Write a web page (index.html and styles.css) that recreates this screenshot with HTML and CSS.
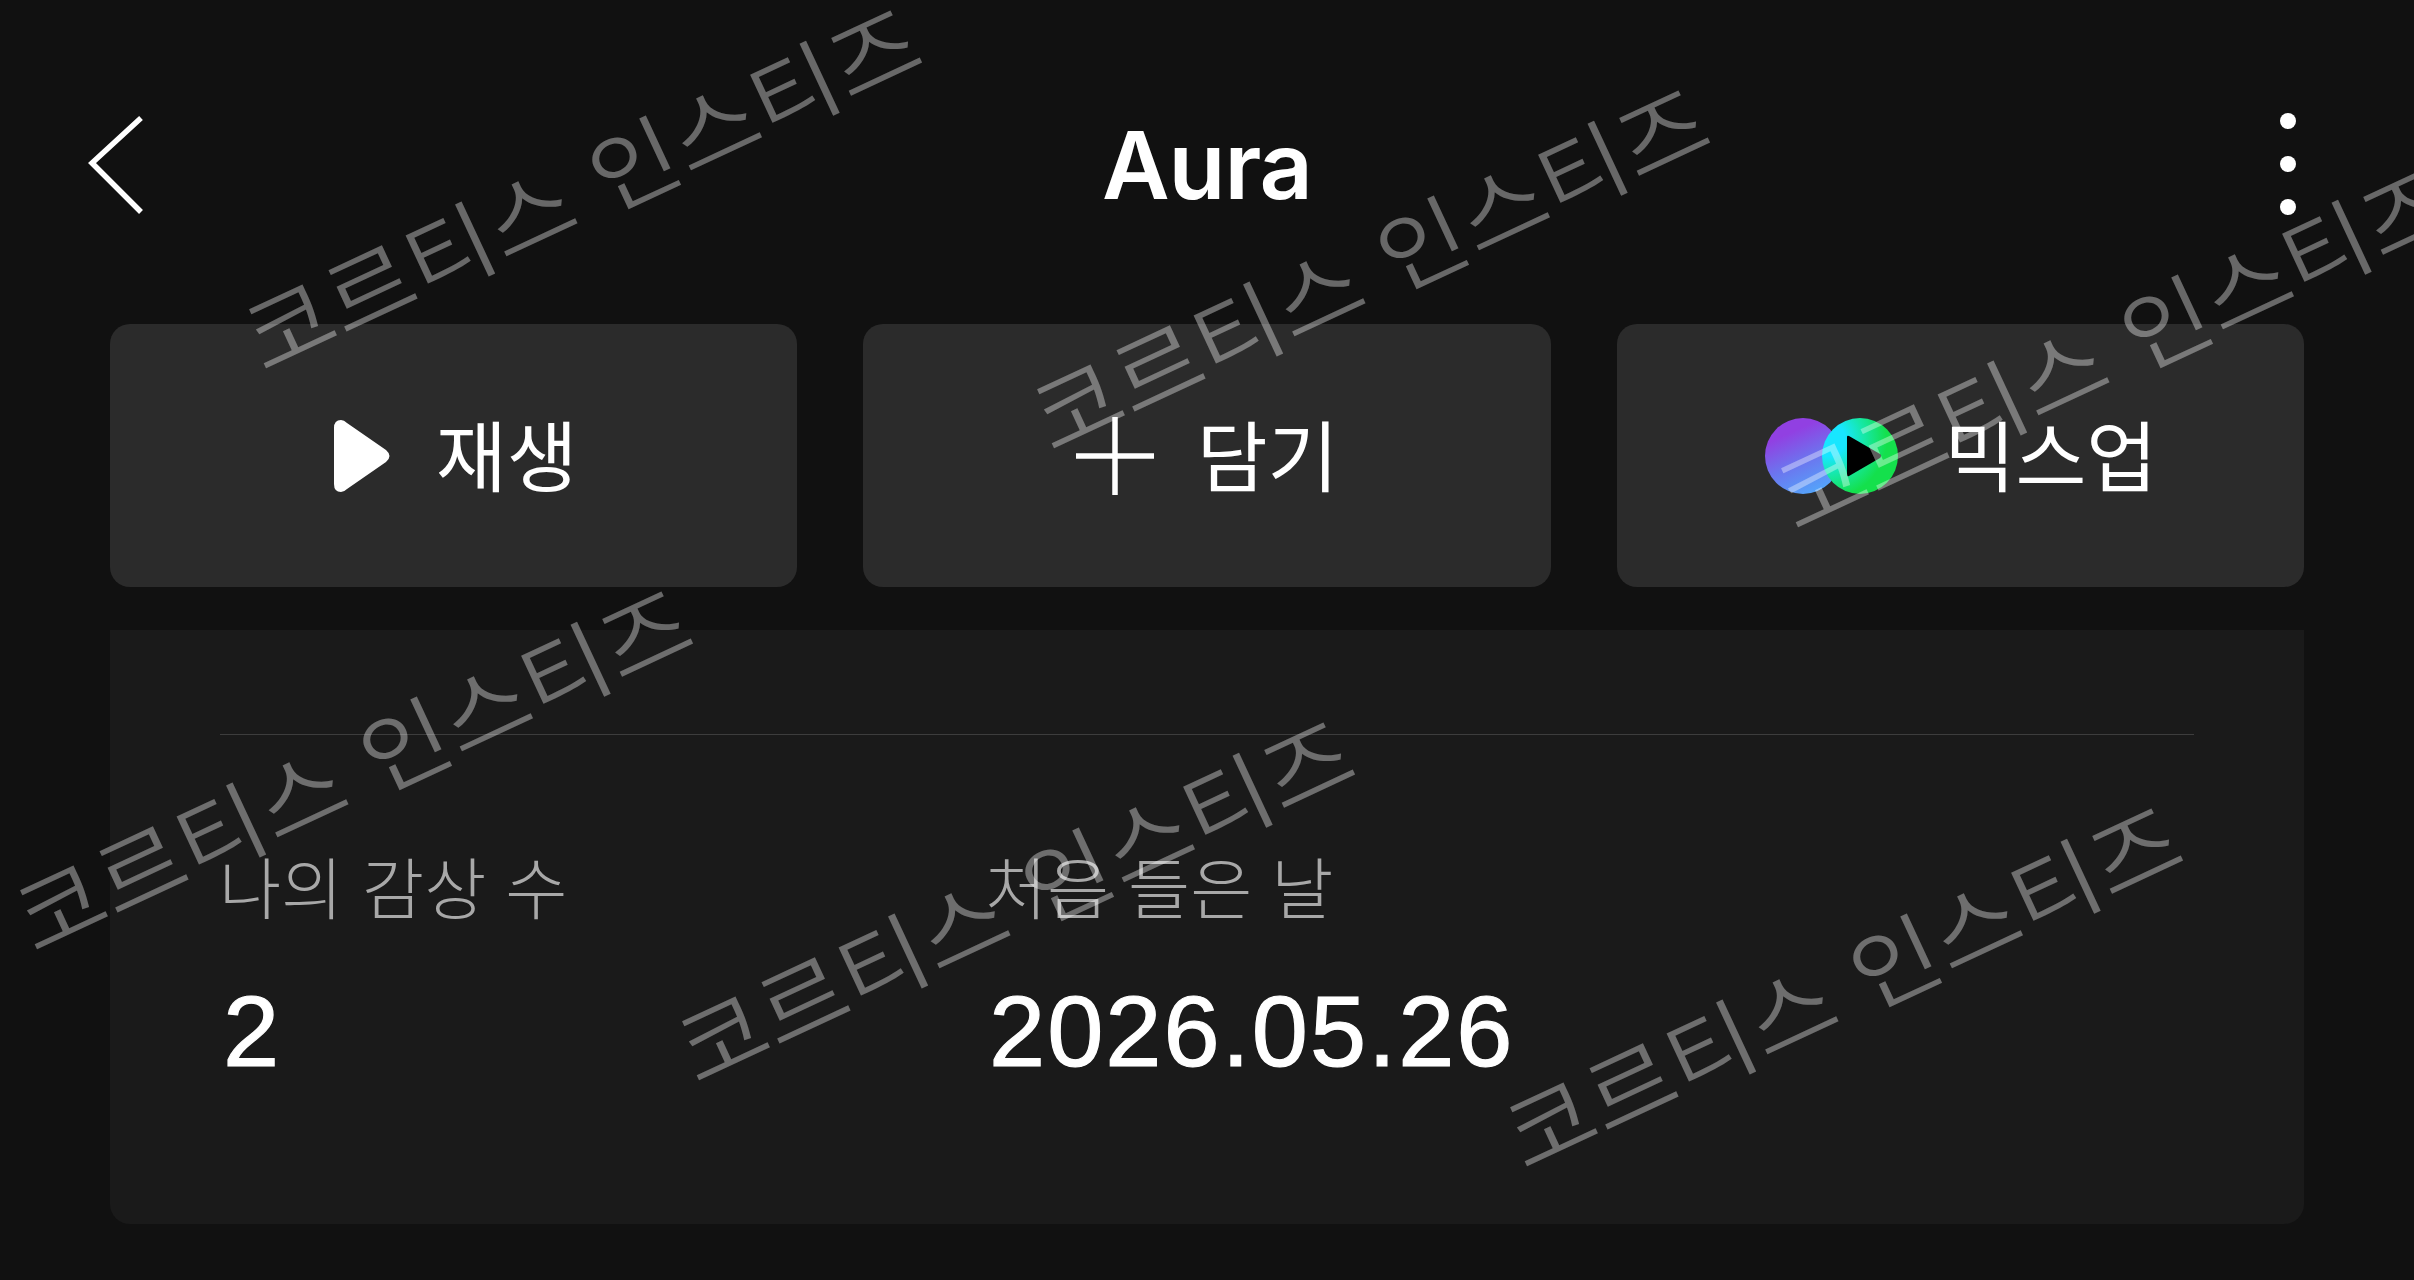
FILE: index.html
```html
<!DOCTYPE html>
<html lang="ko">
<head>
<meta charset="utf-8">
<title>Aura</title>
<link rel="stylesheet" href="styles.css">
</head>
<body>
<div class="page">
  <header class="topbar">
    <button class="icon-btn back" aria-label="뒤로">
      <svg class="chevron" viewBox="0 0 56 100" width="56" height="100"><path d="M54 3 L5 48 L54 97" fill="none" stroke="#fff" stroke-width="5.5"/></svg>
    </button>
    <h1 class="title">Aura</h1>
    <button class="icon-btn more" aria-label="더보기">
      <span class="dot"></span><span class="dot"></span><span class="dot"></span>
    </button>
  </header>

  <div class="actions">
    <button class="action">
      <svg class="ic-play" viewBox="0 0 56 72" width="56" height="72"><path d="M0 8 Q0 0 7 0 Q10 0 13 3 L52 30 Q59 36 52 42 L13 69 Q10 72 7 72 Q0 72 0 64 Z" fill="#fff"/></svg>
      <span class="action-label">재생</span>
    </button>
    <button class="action">
      <svg class="ic-plus" viewBox="0 0 78 78" width="78" height="78"><path d="M39 0 V78 M0 39 H78" stroke="#fff" stroke-width="5.5" fill="none"/></svg>
      <span class="action-label">담기</span>
    </button>
    <button class="action">
      <svg class="ic-mix" viewBox="0 0 135 78" width="135" height="78">
        <defs>
          <linearGradient id="mixA" x1="0.3" y1="0.1" x2="0.7" y2="1">
            <stop offset="0.1" stop-color="#9140e2"/>
            <stop offset="0.5" stop-color="#6d73ee"/>
            <stop offset="1" stop-color="#52a8fb"/>
          </linearGradient>
          <radialGradient id="mixB" gradientUnits="userSpaceOnUse" cx="64" cy="22" r="62">
            <stop offset="0.28" stop-color="#18e6ff"/>
            <stop offset="0.58" stop-color="#16e8a8"/>
            <stop offset="0.95" stop-color="#14e04c"/>
          </radialGradient>
        </defs>
        <circle cx="39" cy="39" r="38" fill="url(#mixA)"/>
        <circle cx="96" cy="39" r="38" fill="url(#mixB)"/>
        <path d="M83 20 Q83 18 85 19 L116 37 Q118 39 116 41 L85 59 Q83 60 83 58 Z" fill="#000"/>
      </svg>
      <span class="action-label">믹스업</span>
    </button>
  </div>

  <section class="panel">
    <hr class="rule">
    <div class="stats">
      <div class="stat">
        <div class="stat-label">나의 감상 수</div>
        <div class="stat-value">2</div>
      </div>
      <div class="stat">
        <div class="stat-label">처음 들은 날</div>
        <div class="stat-value">2026.05.26</div>
      </div>
    </div>
  </section>
</div>

<div class="wm wm1">코르티스 인스티즈</div>
<div class="wm wm2">코르티스 인스티즈</div>
<div class="wm wm3">코르티스 인스티즈</div>
<div class="wm wm4">코르티스 인스티즈</div>
<div class="wm wm5">코르티스 인스티즈</div>
<div class="wm wm6">코르티스 인스티즈</div>
</body>
</html>
```
FILE: styles.css
```css
* { box-sizing: border-box; }
html, body { margin: 0; height: 100%; }
body {
  background: #111111;
  color: #fff;
  font-family: "Noto Sans CJK KR", "Liberation Sans", sans-serif;
  overflow: hidden;
  position: relative;
  width: 2414px;
  height: 1280px;
}
.page { padding: 42px 110px 0; }

.topbar {
  height: 246px;
  margin-bottom: 36px;
  display: grid;
  grid-template-columns: 1fr auto 1fr;
  align-items: center;
}
.icon-btn {
  background: none;
  border: 0;
  padding: 0;
  color: inherit;
  display: flex;
}
.back { margin-left: -23px; justify-self: start; }
.more {
  justify-self: end;
  flex-direction: column;
  gap: 27px;
  margin-right: 8px;
  margin-bottom: 3px;
}
.dot {
  width: 16px;
  height: 16px;
  border-radius: 50%;
  background: #fff;
}
.title {
  margin: 0;
  font-family: Inter, "Liberation Sans", sans-serif;
  font-weight: 600;
  font-size: 93px;
  line-height: 1;
  letter-spacing: -1px;
}

.actions {
  display: grid;
  grid-template-columns: repeat(3, 1fr);
  gap: 66px;
  margin-bottom: 43px;
}
.action {
  height: 263px;
  border: 0;
  border-radius: 20px;
  background: #2b2b2b;
  color: #fff;
  font: inherit;
  display: flex;
  align-items: center;
  justify-content: center;
  gap: 46px;
}
.action-label {
  font-size: 77px;
  line-height: 1;
  font-weight: 400;
  margin-bottom: 6px;
}
.action svg { flex: none; }
.ic-play { margin-left: 4px; }
.ic-plus { margin-right: -3px; }

.panel {
  height: 594px;
  background: #1a1a1a;
  border-radius: 0 0 20px 20px;
  padding: 104px 110px 0;
}
.rule {
  margin: 0 0 116px;
  border: 0;
  height: 1px;
  background: #3d3d3d;
}
.stats { display: flex; }
.stat { width: 766px; }
.stat-label {
  font-size: 67.5px;
  line-height: 1;
  font-weight: 300;
  color: #a8a8a8;
  margin-bottom: 62px;
  margin-left: -1px;
}
.stat-value {
  font-family: "Liberation Sans", sans-serif;
  font-weight: 400;
  font-size: 101px;
  line-height: 1;
  letter-spacing: 2px;
  padding-left: 3px;
  -webkit-text-stroke: 1.2px #fff;
}

.wm {
  position: absolute;
  white-space: nowrap;
  font-size: 96px;
  line-height: 1;
  font-weight: 350;
  letter-spacing: 0;
  color: rgba(255, 255, 255, 0.37);
  transform: translate(-50%, -50%) rotate(-25deg) scaleY(0.92);
  pointer-events: none;
}
.wm1 { left: 580px; top: 185px; }
.wm2 { left: 1368px; top: 265px; }
.wm3 { left: 2112px; top: 344px; }
.wm4 { left: 351px; top: 766px; }
.wm5 { left: 1013px; top: 897px; }
.wm6 { left: 1841px; top: 983px; }
```
